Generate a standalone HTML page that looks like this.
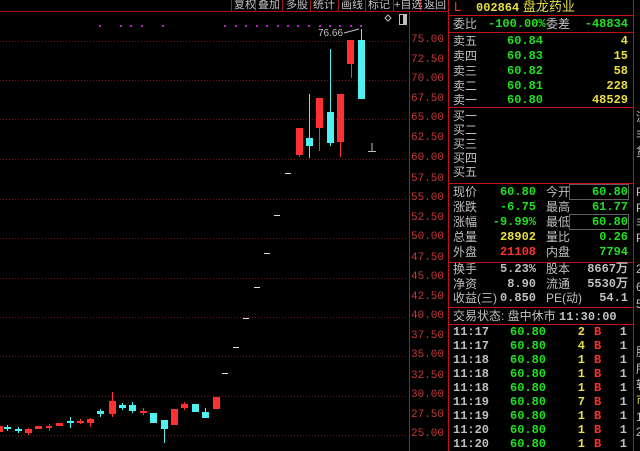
<!DOCTYPE html>
<html><head><meta charset="utf-8"><style>
body{margin:0;background:#000;width:640px;height:451px;overflow:hidden;position:relative;font-family:"Liberation Sans","Noto Sans CJK SC",sans-serif}
.t{position:absolute;white-space:nowrap;font-size:12px;line-height:14px}
.g{color:#c0c0c0}.gr{color:#20e020}.y{color:#e8e040}.r{color:#ff3030}
.rt{text-align:right}
.ax{position:absolute;left:411px;font-size:11px;color:#c83838;font-family:"Liberation Mono",monospace}
.n{font-family:"Liberation Mono",monospace;font-weight:bold;font-size:12px}
</style></head><body>
<svg width="640" height="451" style="position:absolute;left:0;top:0">
<line x1="0" y1="11.5" x2="448" y2="11.5" stroke="#b01010"/>
<g stroke="#c0c0c0" stroke-opacity="0.0"></g>
<g stroke="#a01818" stroke-width="1">
<line x1="231.5" y1="0" x2="231.5" y2="11"/><line x1="255.5" y1="0" x2="255.5" y2="11"/><line x1="282.5" y1="0" x2="282.5" y2="11"/><line x1="310.5" y1="0" x2="310.5" y2="11"/><line x1="338.5" y1="0" x2="338.5" y2="11"/><line x1="365.5" y1="0" x2="365.5" y2="11"/><line x1="393.5" y1="0" x2="393.5" y2="11"/><line x1="420.5" y1="0" x2="420.5" y2="11"/>
</g>
<g stroke="#7a1010" stroke-dasharray="1,2">
<line x1="0" y1="41.5" x2="408" y2="41.5"/><line x1="0" y1="80.5" x2="408" y2="80.5"/><line x1="0" y1="119.5" x2="408" y2="119.5"/><line x1="0" y1="159.5" x2="408" y2="159.5"/><line x1="0" y1="199.5" x2="408" y2="199.5"/><line x1="0" y1="238.5" x2="408" y2="238.5"/><line x1="0" y1="278.5" x2="408" y2="278.5"/><line x1="0" y1="317.5" x2="408" y2="317.5"/><line x1="0" y1="356.5" x2="408" y2="356.5"/><line x1="0" y1="396.5" x2="408" y2="396.5"/><line x1="0" y1="435.5" x2="408" y2="435.5"/>
</g>
<line x1="409.5" y1="12" x2="409.5" y2="451" stroke="#c01010"/>
<line x1="448.5" y1="0" x2="448.5" y2="451" stroke="#c01010"/>
<line x1="633.5" y1="0" x2="633.5" y2="451" stroke="#c01010"/>
<g stroke="#c01010">
<line x1="448" y1="15.5" x2="634" y2="15.5"/><line x1="448" y1="32.5" x2="634" y2="32.5"/><line x1="448" y1="107.5" x2="634" y2="107.5"/><line x1="448" y1="183.5" x2="634" y2="183.5"/><line x1="448" y1="262.5" x2="634" y2="262.5"/><line x1="448" y1="307.5" x2="634" y2="307.5"/><line x1="448" y1="324.5" x2="634" y2="324.5"/>
</g>
<g fill="#c020c0">
<rect x="99" y="25" width="2" height="2"/><rect x="120" y="25" width="2" height="2"/><rect x="130" y="25" width="2" height="2"/><rect x="141" y="25" width="2" height="2"/><rect x="162" y="25" width="2" height="2"/><rect x="224" y="25" width="2" height="2"/><rect x="235" y="25" width="2" height="2"/><rect x="245" y="25" width="2" height="2"/><rect x="256" y="25" width="2" height="2"/><rect x="266" y="25" width="2" height="2"/><rect x="277" y="25" width="2" height="2"/><rect x="287" y="25" width="2" height="2"/><rect x="297" y="25" width="2" height="2"/><rect x="308" y="25" width="2" height="2"/><rect x="319" y="25" width="2" height="2"/><rect x="329" y="25" width="2" height="2"/><rect x="339" y="25" width="2" height="2"/><rect x="350" y="25" width="2" height="2"/><rect x="360" y="25" width="2" height="2"/>
</g>
<!-- bottom candles -->
<g>
<rect x="0" y="426" width="3" height="6" fill="#ff3030"/>
<rect x="4" y="427" width="7" height="2" fill="#50f0f0"/><line x1="7.5" y1="425" x2="7.5" y2="431" stroke="#50f0f0"/>
<rect x="15" y="429" width="7" height="2" fill="#50f0f0"/><line x1="18.5" y1="427" x2="18.5" y2="433" stroke="#50f0f0"/>
<rect x="25" y="429" width="7" height="4" fill="#ff3030"/><line x1="28.5" y1="428" x2="28.5" y2="435" stroke="#ff3030"/>
<rect x="35" y="426" width="7" height="3" fill="#ff3030"/>
<rect x="46" y="426" width="6" height="2" fill="#ff3030"/><line x1="49.5" y1="424" x2="49.5" y2="431" stroke="#ff3030"/>
<rect x="56" y="423" width="7" height="3" fill="#ff3030"/>
<rect x="67" y="421" width="7" height="2" fill="#50f0f0"/><line x1="70.5" y1="417" x2="70.5" y2="428" stroke="#50f0f0"/>
<rect x="77" y="421" width="7" height="2" fill="#ff3030"/><line x1="80.5" y1="419" x2="80.5" y2="424" stroke="#ff3030"/>
<rect x="87" y="419" width="7" height="4" fill="#ff3030"/><line x1="90.5" y1="418" x2="90.5" y2="427" stroke="#ff3030"/>
<rect x="97" y="411" width="7" height="3" fill="#50f0f0"/><line x1="100.5" y1="409" x2="100.5" y2="417" stroke="#50f0f0"/>
<rect x="109" y="401" width="7" height="13" fill="#ff3030"/><line x1="112.5" y1="392" x2="112.5" y2="417" stroke="#ff3030"/>
<rect x="119" y="405" width="7" height="3" fill="#50f0f0"/><line x1="122.5" y1="403" x2="122.5" y2="410" stroke="#50f0f0"/>
<rect x="129" y="405" width="7" height="6" fill="#50f0f0"/><line x1="132.5" y1="402" x2="132.5" y2="413" stroke="#50f0f0"/>
<rect x="140" y="411" width="7" height="2" fill="#ff3030"/><line x1="143.5" y1="408" x2="143.5" y2="415" stroke="#ff3030"/>
<rect x="150" y="413" width="7" height="10" fill="#50f0f0"/>
<rect x="161" y="420" width="7" height="9" fill="#50f0f0"/><line x1="164.5" y1="429" x2="164.5" y2="443" stroke="#50f0f0"/>
<rect x="171" y="409" width="7" height="16" fill="#ff3030"/>
<rect x="181" y="404" width="7" height="4" fill="#ff3030"/><line x1="184.5" y1="402" x2="184.5" y2="410" stroke="#ff3030"/>
<rect x="192" y="404" width="7" height="8" fill="#50f0f0"/>
<rect x="202" y="412" width="7" height="6" fill="#50f0f0"/><line x1="205.5" y1="408" x2="205.5" y2="418" stroke="#50f0f0"/>
<rect x="213" y="397" width="7" height="12" fill="#ff3030"/>
</g>
<g fill="#e0e0e0">
<rect x="222" y="373" width="6" height="1"/><rect x="233" y="347" width="6" height="1"/><rect x="243" y="318" width="6" height="1"/><rect x="254" y="287" width="6" height="1"/><rect x="264" y="253" width="6" height="1"/><rect x="274" y="215" width="6" height="1"/><rect x="285" y="173" width="6" height="1"/>
</g>
<!-- top candles -->
<line x1="299.5" y1="150" x2="299.5" y2="157" stroke="#ff3030"/><rect x="296" y="128" width="7" height="27" fill="#ff3030"/>
<line x1="309.5" y1="94" x2="309.5" y2="158" stroke="#50f0f0"/><rect x="306" y="138" width="7" height="8" fill="#50f0f0"/>
<line x1="319.5" y1="128" x2="319.5" y2="151" stroke="#ff3030"/><rect x="316" y="98" width="7" height="30" fill="#ff3030"/>
<line x1="330.5" y1="49" x2="330.5" y2="146" stroke="#50f0f0"/><rect x="327" y="112" width="7" height="31" fill="#50f0f0"/>
<line x1="340.5" y1="140" x2="340.5" y2="157" stroke="#ff3030"/><rect x="337" y="94" width="7" height="48" fill="#ff3030"/>
<line x1="351.5" y1="60" x2="351.5" y2="78" stroke="#ff3030"/><rect x="347" y="40" width="7" height="24" fill="#ff3030"/>
<line x1="361.5" y1="29" x2="361.5" y2="40" stroke="#50f0f0"/><rect x="358" y="40" width="7" height="59" fill="#50f0f0"/>
<line x1="344" y1="33" x2="359" y2="29" stroke="#c0c0c0"/>
<text x="318" y="36" fill="#c0c0c0" font-size="10" font-family="Liberation Sans">76.66</text>
<path d="M368 151.5H376M372 143V151" stroke="#c0c0c0"/>
<path d="M385 18l3-3 3 3-3 3z" fill="none" stroke="#c0c0c0"/>
<rect x="399.5" y="14.5" width="7" height="10" fill="none" stroke="#c0c0c0"/><rect x="403" y="15" width="3" height="9" fill="#c0c0c0"/>
</svg>
<div class="t g" style="top:-2px;left:234px;font-size:11px;word-spacing:0">复权</div>
<div class="t g" style="top:-2px;left:258px;font-size:11px">叠加</div>
<div class="t g" style="top:-2px;left:286px;font-size:11px">多股</div>
<div class="t g" style="top:-2px;left:313px;font-size:11px">统计</div>
<div class="t g" style="top:-2px;left:341px;font-size:11px">画线</div>
<div class="t g" style="top:-2px;left:368px;font-size:11px">标记</div>
<div class="t g" style="top:-2px;left:394px;font-size:11px">+自选</div>
<div class="t g" style="top:-2px;left:424px;font-size:11px">返回</div>

<div class="ax" style="top:34px">75.00</div><div class="ax" style="top:54px">72.50</div><div class="ax" style="top:73px">70.00</div><div class="ax" style="top:93px">67.50</div><div class="ax" style="top:112px">65.00</div><div class="ax" style="top:132px">62.50</div><div class="ax" style="top:152px">60.00</div><div class="ax" style="top:173px">57.50</div><div class="ax" style="top:192px">55.00</div><div class="ax" style="top:212px">52.50</div><div class="ax" style="top:231px">50.00</div><div class="ax" style="top:252px">47.50</div><div class="ax" style="top:271px">45.00</div><div class="ax" style="top:291px">42.50</div><div class="ax" style="top:310px">40.00</div><div class="ax" style="top:330px">37.50</div><div class="ax" style="top:349px">35.00</div><div class="ax" style="top:370px">32.50</div><div class="ax" style="top:389px">30.00</div><div class="ax" style="top:409px">27.50</div><div class="ax" style="top:428px">25.00</div>

<div class="t r" style="top:0px;left:454px;font-size:13px">L</div>
<div class="t y" style="top:0px;left:476px;font-size:13px"><span class="n">002864</span> 盘龙药业</div>
<div class="t g" style="top:17px;left:453px">委比</div><div class="t gr n" style="top:17px;left:488px">-100.00%</div>
<div class="t g" style="top:17px;left:546px">委差</div><div class="t gr n rt" style="top:17px;left:570px;width:58px">-48834</div>

<div style="position:absolute;top:34px;left:0">
<div class="t g" style="top:0;left:453px">卖五</div><div class="t gr n" style="top:0;left:507px">60.84</div><div class="t y n rt" style="top:0;left:570px;width:58px">4</div>
<div class="t g" style="top:15px;left:453px">卖四</div><div class="t gr n" style="top:15px;left:507px">60.83</div><div class="t y n rt" style="top:15px;left:570px;width:58px">15</div>
<div class="t g" style="top:30px;left:453px">卖三</div><div class="t gr n" style="top:30px;left:507px">60.82</div><div class="t y n rt" style="top:30px;left:570px;width:58px">58</div>
<div class="t g" style="top:45px;left:453px">卖二</div><div class="t gr n" style="top:45px;left:507px">60.81</div><div class="t y n rt" style="top:45px;left:570px;width:58px">228</div>
<div class="t g" style="top:59px;left:453px">卖一</div><div class="t gr n" style="top:59px;left:507px">60.80</div><div class="t y n rt" style="top:59px;left:570px;width:58px">48529</div>
</div>
<div class="t g" style="top:109px;left:453px">买一</div><div class="t g" style="top:123px;left:453px">买二</div><div class="t g" style="top:137px;left:453px">买三</div><div class="t g" style="top:151px;left:453px">买四</div><div class="t g" style="top:165px;left:453px">买五</div>

<div class="t g" style="top:185px;left:453px">现价</div><div class="t gr n rt" style="top:185px;left:480px;width:56px">60.80</div><div class="t g" style="top:185px;left:546px">今开</div><div class="t gr n rt" style="top:185px;left:570px;width:58px;outline:1px solid #606060">60.80</div>
<div class="t g" style="top:200px;left:453px">涨跌</div><div class="t gr n rt" style="top:200px;left:480px;width:56px">-6.75</div><div class="t g" style="top:200px;left:546px">最高</div><div class="t gr n rt" style="top:200px;left:570px;width:58px">61.77</div>
<div class="t g" style="top:215px;left:453px">涨幅</div><div class="t gr n rt" style="top:215px;left:480px;width:56px">-9.99%</div><div class="t g" style="top:215px;left:546px">最低</div><div class="t gr n rt" style="top:215px;left:570px;width:58px;outline:1px solid #606060">60.80</div>
<div class="t g" style="top:230px;left:453px">总量</div><div class="t y n rt" style="top:230px;left:480px;width:56px">28902</div><div class="t g" style="top:230px;left:546px">量比</div><div class="t gr n rt" style="top:230px;left:570px;width:58px">0.26</div>
<div class="t g" style="top:245px;left:453px">外盘</div><div class="t r n rt" style="top:245px;left:480px;width:56px">21108</div><div class="t g" style="top:245px;left:546px">内盘</div><div class="t gr n rt" style="top:245px;left:570px;width:58px">7794</div>

<div class="t g" style="top:262px;left:453px">换手</div><div class="t g n rt" style="top:262px;left:480px;width:56px">5.23%</div><div class="t g" style="top:262px;left:546px">股本</div><div class="t g n rt" style="top:262px;left:570px;width:58px">8667万</div>
<div class="t g" style="top:277px;left:453px">净资</div><div class="t g n rt" style="top:277px;left:480px;width:56px">8.90</div><div class="t g" style="top:277px;left:546px">流通</div><div class="t g n rt" style="top:277px;left:570px;width:58px">5530万</div>
<div class="t g" style="top:291px;left:453px">收益(三)</div><div class="t g n rt" style="top:291px;left:480px;width:56px">0.850</div><div class="t g" style="top:291px;left:546px">PE(动)</div><div class="t g n rt" style="top:291px;left:570px;width:58px">54.1</div>
<div class="t g" style="top:309px;left:453px">交易状态: 盘中休市 <span class="n">11:30:00</span></div>

<div style="position:absolute;top:325px;left:0">
<div class="t g n" style="top:0;left:453px">11:17</div><div class="t gr n" style="top:0;left:510px">60.80</div><div class="t y n rt" style="top:0;left:560px;width:25px">2</div><div class="t r n" style="top:0;left:594px">B</div><div class="t g n rt" style="top:0;left:610px;width:17px">1</div>
<div class="t g n" style="top:14px;left:453px">11:17</div><div class="t gr n" style="top:14px;left:510px">60.80</div><div class="t y n rt" style="top:14px;left:560px;width:25px">4</div><div class="t r n" style="top:14px;left:594px">B</div><div class="t g n rt" style="top:14px;left:610px;width:17px">1</div>
<div class="t g n" style="top:28px;left:453px">11:18</div><div class="t gr n" style="top:28px;left:510px">60.80</div><div class="t y n rt" style="top:28px;left:560px;width:25px">1</div><div class="t r n" style="top:28px;left:594px">B</div><div class="t g n rt" style="top:28px;left:610px;width:17px">1</div>
<div class="t g n" style="top:42px;left:453px">11:18</div><div class="t gr n" style="top:42px;left:510px">60.80</div><div class="t y n rt" style="top:42px;left:560px;width:25px">1</div><div class="t r n" style="top:42px;left:594px">B</div><div class="t g n rt" style="top:42px;left:610px;width:17px">1</div>
<div class="t g n" style="top:56px;left:453px">11:18</div><div class="t gr n" style="top:56px;left:510px">60.80</div><div class="t y n rt" style="top:56px;left:560px;width:25px">1</div><div class="t r n" style="top:56px;left:594px">B</div><div class="t g n rt" style="top:56px;left:610px;width:17px">1</div>
<div class="t g n" style="top:70px;left:453px">11:19</div><div class="t gr n" style="top:70px;left:510px">60.80</div><div class="t y n rt" style="top:70px;left:560px;width:25px">7</div><div class="t r n" style="top:70px;left:594px">B</div><div class="t g n rt" style="top:70px;left:610px;width:17px">1</div>
<div class="t g n" style="top:84px;left:453px">11:19</div><div class="t gr n" style="top:84px;left:510px">60.80</div><div class="t y n rt" style="top:84px;left:560px;width:25px">1</div><div class="t r n" style="top:84px;left:594px">B</div><div class="t g n rt" style="top:84px;left:610px;width:17px">1</div>
<div class="t g n" style="top:98px;left:453px">11:20</div><div class="t gr n" style="top:98px;left:510px">60.80</div><div class="t y n rt" style="top:98px;left:560px;width:25px">1</div><div class="t r n" style="top:98px;left:594px">B</div><div class="t g n rt" style="top:98px;left:610px;width:17px">1</div>
<div class="t g n" style="top:112px;left:453px">11:20</div><div class="t gr n" style="top:112px;left:510px">60.80</div><div class="t y n rt" style="top:112px;left:560px;width:25px">1</div><div class="t r n" style="top:112px;left:594px">B</div><div class="t g n rt" style="top:112px;left:610px;width:17px">1</div>
</div>

<div class="t g" style="top:110px;left:636px">沪</div><div class="t g" style="top:128px;left:636px">非</div><div class="t g" style="top:145px;left:636px">货</div>
<div class="t g" style="top:185px;left:636px">P</div><div class="t g" style="top:201px;left:636px">P</div><div class="t g" style="top:216px;left:636px">非</div><div class="t g" style="top:231px;left:636px">P</div>
<div class="t g" style="top:262px;left:636px">2</div><div class="t g" style="top:280px;left:636px">6</div><div class="t g" style="top:297px;left:636px">5</div>
<div class="t g" style="top:345px;left:636px">股</div><div class="t g" style="top:362px;left:636px">所</div><div class="t g" style="top:378px;left:636px">转</div>
<div class="t y" style="top:393px;left:636px">市</div><div class="t g" style="top:410px;left:636px">1</div><div class="t g" style="top:425px;left:636px">2</div>
</body></html>
